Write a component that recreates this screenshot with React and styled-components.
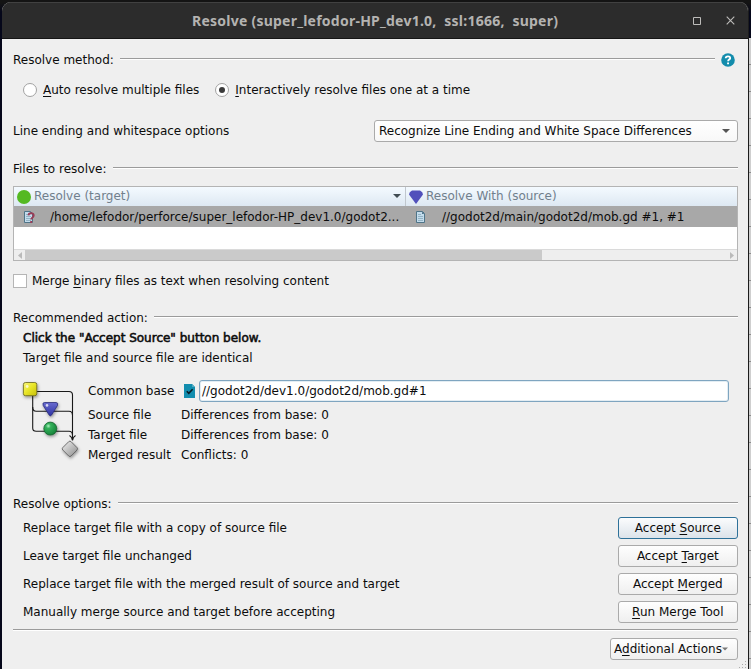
import React from "react";
import styled, { createGlobalStyle, css } from "styled-components";

const GlobalStyle = createGlobalStyle`
  * { box-sizing: border-box; }
  body {
    margin: 0;
    background: #05070f;
    color: #0c0c0c;
    font: 12px/20px "DejaVu Sans", Verdana, sans-serif;
    overflow: hidden;
  }
  svg { display: block; flex: none; }
`;

const Desktop = styled.div`
  display: flex;
  width: 751px;
  height: 669px;
  padding: 2px 0 0 2px;
  background: linear-gradient(#141414 0 3px, #05071a 12px);
`;

const Window = styled.main`
  display: flex;
  flex-direction: column;
  width: 747px;
  height: 667px;
  border-right: 1px solid #1c1c1c;
  border-radius: 9px 9px 0 0;
  background: #efefef;
  overflow: hidden;
`;

const BackgroundEdge = styled.div`
  width: 2px;
  margin-top: 36px;
  background: repeating-linear-gradient(#cfcfcf 0 26px, #8b8b8b 26px 27px);
`;

const TitleBar = styled.header`
  display: flex;
  align-items: center;
  flex: none;
  height: 37px;
  padding: 0 13px 0 190px;
  background: #2c2c2c;
  border-top: 1px solid #414141;
  border-bottom: 1px solid #151515;
  color: #b4b3b1;
`;

const Title = styled.h1`
  flex: 1;
  margin: 0;
  font: 700 14px/20px "Noto Sans", sans-serif;
  letter-spacing: 0.24px;
  white-space: pre;
`;

const WindowControls = styled.div`
  display: flex;
  align-items: center;
  gap: 25px;
`;

const Body = styled.div`
  display: flex;
  flex-direction: column;
  padding: 11px 10px 0 11px;
`;

const Section = styled.div`
  display: flex;
  align-items: center;
  flex: none;
  height: ${(p) => p.$height || 20}px;
  margin-top: ${(p) => p.$top || 0}px;
  padding-right: ${(p) => p.$right || 0}px;
  white-space: nowrap;
`;

const Rule = styled.i`
  flex: 1;
  height: 2px;
  margin: 0 ${(p) => p.$right || 0}px 2px 6px;
  border-top: 1px solid #9b9b9b;
  border-bottom: 1px solid #fff;
`;

const RadioRow = styled.div`
  display: flex;
  align-items: center;
  height: 40px;
  margin-bottom: 1px;
  padding-left: 10px;
  gap: 16px;
`;

const RadioLabel = styled.label`
  display: flex;
  align-items: center;
  gap: 6px;
`;

const Radio = styled.span`
  display: grid;
  place-items: center;
  width: 14px;
  height: 14px;
  border: 1px solid #a2a2a2;
  border-radius: 50%;
  background: #fff;
  ${(p) => p.$checked && css`
    &::after {
      content: "";
      width: 6px;
      height: 6px;
      border-radius: 50%;
      background: #3b3b3b;
    }
  `}
`;

const Key = styled.span`
  text-decoration: underline;
  text-decoration-thickness: 1px;
  text-underline-offset: 2px;
  text-decoration-skip-ink: none;
`;

const WhitespaceRow = styled.div`
  display: flex;
  align-items: center;
  justify-content: space-between;
  height: 40px;
`;

const buttonFace = css`
  display: flex;
  align-items: center;
  height: 22px;
  border: 1px solid #aaa;
  border-radius: 3px;
  background: linear-gradient(#fefefe, #efefef);
  white-space: nowrap;
  font: inherit;
  color: inherit;
`;

const Combo = styled.div`
  ${buttonFace}
  justify-content: space-between;
  width: 364px;
  padding: 0 7px 0 4px;
  background: linear-gradient(#fff, #f8f8f8);
`;

const Table = styled.div`
  display: flex;
  flex-direction: column;
  height: 75px;
  margin-bottom: 1px;
  border: 1px solid #b4b4b4;
  background: #fff;
  overflow: hidden;
`;

const TableRow = styled.div`
  display: grid;
  grid-template-columns: 392px 1fr;
  flex: none;
  height: 21px;
  background: #a8a8a8;
`;

const TableHead = styled(TableRow)`
  height: 19px;
  background: linear-gradient(#f4faff, #dde8f2);
  color: #71808d;
`;

const HeadCell = styled.div`
  display: flex;
  align-items: flex-start;
  gap: 3px;
  height: 19px;
  padding: 3px 4px 0 3px;
  ${(p) => p.$divided && css`border-right: 1px solid #c0c7ce;`}
`;

const HeadText = styled.span`
  flex: 1;
  margin-top: -2px;
  line-height: 16px;
`;

const SortMark = styled.span`
  padding-top: 4px;
`;

const FileCell = styled.div`
  display: flex;
  align-items: center;
  gap: 15px;
  padding-left: 9px;
  white-space: nowrap;
`;

const ScrollBar = styled.div`
  display: flex;
  align-items: center;
  flex: none;
  height: 11px;
  margin-top: auto;
  border-top: 1px solid #dadada;
  background: #eee;
`;

const ScrollArrow = styled.span`
  display: grid;
  place-items: center;
  width: 11px;
  height: 10px;
`;

const ScrollThumb = styled.span`
  width: 517px;
  height: 10px;
  margin-right: auto;
  background: #cacaca;
`;

const CheckRow = styled.label`
  display: flex;
  align-items: center;
  gap: 5px;
  height: 38px;
`;

const CheckBox = styled.span`
  width: 14px;
  height: 14px;
  border: 1px solid #b5b5b5;
  background: #fff;
`;

const Advice = styled.div`
  padding-left: 10px;
`;

const Strong = styled.p`
  margin: 0;
  -webkit-text-stroke: 0.55px #0c0c0c;
`;

const Paragraph = styled.p`
  margin: 0;
`;

const Details = styled.div`
  display: flex;
  height: 126px;
  padding: 10px 9px 0 5px;
`;

const DetailLines = styled.div`
  flex: 1;
  padding-left: 4px;
`;

const DetailLine = styled.div`
  display: flex;
  align-items: center;
  height: 20px;
`;

const BaseLine = styled(DetailLine)`
  height: 27px;
  padding-bottom: 1px;
`;

const DetailName = styled.span`
  flex: none;
  width: ${(p) => p.$width || 93}px;
`;

const PathInput = styled.div`
  flex: 1;
  height: 22px;
  margin-left: 4px;
  padding-left: 2px;
  border: 1px solid #7fa5c0;
  border-radius: 3px;
  box-shadow: inset 0 0 0 1px #e3edf3;
  background: #fff;
`;

const OptionRow = styled.div`
  display: flex;
  align-items: center;
  justify-content: space-between;
  height: 28px;
  padding-left: 10px;
`;

const Button = styled.button`
  ${buttonFace}
  justify-content: center;
  width: 120px;
  padding: 0 0.4px 0 0;
  ${(p) => p.$primary && css`
    border-color: #2e7199;
    background: linear-gradient(#fbfcfd, #dce3ea);
  `}
`;

const MenuButton = styled(Button)`
  justify-content: flex-start;
  width: 128px;
  padding-left: 3px;
`;

const Options = styled.div`
  flex: none;
`;

const FooterRule = styled.div`
  height: 2px;
  margin: 3px 0 7px;
  border-top: 1px solid #9b9b9b;
  border-bottom: 1px solid #fff;
`;

const Footer = styled.footer`
  display: flex;
  justify-content: flex-end;
`;

const GripRow = styled.div`
  display: flex;
  justify-content: flex-end;
  height: 9px;
  margin-top: auto;
`;

const Caret = ({ w = 8, fill = "#555" }) => (
  <svg width={w} height="4" viewBox="0 0 8 4"><path d="M0 0h8L4 4z" fill={fill} /></svg>
);

const HelpIcon = () => (
  <svg width="14" height="14" viewBox="0 0 14 14">
    <circle cx="7" cy="7" r="6.8" fill="#138cac" />
    <path d="M4.7 5.2C4.8 2.6 9.3 2.7 9.2 5.1C9.1 6.7 7.1 6.5 7.1 8.2" fill="none" stroke="#fff" strokeWidth="1.8" />
    <path d="M6.1 9.4h1.9v1.9H6.1z" fill="#fff" />
  </svg>
);

const FileIcon = ({ question }) => (
  <svg width="12" height="14" viewBox="0 0 12 14">
    <path d="M1.5 1.5h6l2 2v9h-8z" fill="#c3dcec" stroke="#4f7488" />
    <path d="M7 1.5v2.6h2.5z" fill="#4f7488" />
    <path d="M3 4.5h3M3 6.5h5M3 8.5h5M3 10.5h5" stroke="#86a8bb" strokeWidth=".8" />
    {question && (
      <g>
        <path d="M5.5 5.4C5.6 2.4 10.8 2.6 10.7 5.4C10.6 7.6 8.2 7.2 8.2 9.6" fill="none" stroke="#9a3c55" strokeWidth="1.9" />
        <path d="M7.2 11h2v2h-2z" fill="#9a3c55" />
      </g>
    )}
  </svg>
);

const MergeDiagram = () => (
  <svg width="66" height="84" viewBox="18 378 66 84">
    <defs>
      <linearGradient id="yellow" x1="0" y1="0" x2="1" y2="1">
        <stop offset="0" stopColor="#f7f47e" /><stop offset=".45" stopColor="#eae72b" /><stop offset="1" stopColor="#c6bf08" />
      </linearGradient>
      <linearGradient id="blue" x1="0" y1="0" x2="0" y2="1">
        <stop offset="0" stopColor="#686ace" /><stop offset="1" stopColor="#2f34a5" />
      </linearGradient>
      <radialGradient id="green" cx=".35" cy=".3" r=".75">
        <stop offset="0" stopColor="#b0f0c0" /><stop offset=".25" stopColor="#35b25c" /><stop offset="1" stopColor="#148037" />
      </radialGradient>
      <linearGradient id="grey" x1="0" y1="0" x2="1" y2="1">
        <stop offset="0" stopColor="#f2f2f2" /><stop offset="1" stopColor="#8b8b8b" />
      </linearGradient>
      <filter id="shade" x="-40%" y="-40%" width="190%" height="190%">
        <feDropShadow dx=".8" dy="1.5" stdDeviation="1.5" floodOpacity=".4" />
      </filter>
    </defs>
    <g fill="none" stroke="#191919" strokeWidth="1.1">
      <path d="M37 391.5H69q3.5 0 3.5 3.5V440" />
      <path d="M32.7 396V428q0 3.3 3.5 3.3H69q3.5 0 3.5 4" />
      <path d="M32.7 407q0 4.3 3.5 4.3H69q3.5 0 3.5 4" />
      <path d="M69.5 435.5q2.5 1.5 3 5q.5-3.5 3-5" />
    </g>
    <g filter="url(#shade)" strokeWidth=".8">
      <rect x="23.4" y="382.5" width="13.4" height="13.2" rx="2" fill="url(#yellow)" stroke="#65621b" />
      <path d="M44.5 402.5H56q2.5 0 1.5 3L51.6 415q-1.2 1.8-2.5 0L43.2 405.5q-1.1-3 1.3-3z" fill="url(#blue)" stroke="#292d78" />
      <circle cx="50.3" cy="428.6" r="6.5" fill="url(#green)" stroke="#17612f" />
      <path d="M68.7 441.7q1.2-1.2 2.4 0L77 447.6q1.2 1.2 0 2.4L71.1 456q-1.2 1.2-2.4 0L62.8 450q-1.2-1.2 0-2.4z" fill="url(#grey)" stroke="#555" />
    </g>
    <circle cx="27.2" cy="386.5" r="1.4" fill="#fff" opacity=".7" />
    <circle cx="47" cy="405.4" r="1.3" fill="#fff" opacity=".75" />
  </svg>
);

const BaseIcon = () => (
  <svg width="11" height="14" viewBox="0 0 11 14">
    <path d="M0 0h8l3 3v11H0z" fill="#128dae" />
    <path d="M8 0v3h3z" fill="#52a9c0" />
    <path d="M2.8 7.2l2 2.1 3.8-4" fill="none" stroke="#071b24" strokeWidth="1.6" />
  </svg>
);

const options = [
  ["Replace target file with a copy of source file", "Accept ", "S", "ource", true],
  ["Leave target file unchanged", "Accept ", "T", "arget"],
  ["Replace target file with the merged result of source and target", "Accept ", "M", "erged"],
  ["Manually merge source and target before accepting", "", "R", "un Merge Tool"],
];

export default function App() {
  return (
    <Desktop>
      <GlobalStyle />
      <Window>
        <TitleBar>
          <Title>{"Resolve (super_lefodor-HP_dev1.0,  ssl:1666,  super)"}</Title>
          <WindowControls>
            <svg width="8" height="8"><path d="M.5.5h7v7h-7z" fill="none" stroke="#bdbcba" /></svg>
            <svg width="9" height="9"><path d="M.7.7l7.6 7.6M8.3.7L.7 8.3" stroke="#bdbcba" strokeWidth="1.1" /></svg>
          </WindowControls>
        </TitleBar>
        <Body>
          <Section $right={3}>Resolve method:<Rule $right={6} /><HelpIcon /></Section>
          <RadioRow>
            <RadioLabel><Radio /><span><Key>A</Key>uto resolve multiple files</span></RadioLabel>
            <RadioLabel><Radio $checked /><span><Key>I</Key>nteractively resolve files one at a time</span></RadioLabel>
          </RadioRow>
          <WhitespaceRow>
            Line ending and whitespace options
            <Combo>Recognize Line Ending and White Space Differences<Caret /></Combo>
          </WhitespaceRow>
          <Section $height={35}>Files to resolve:<Rule /></Section>
          <Table>
            <TableHead>
              <HeadCell $divided>
                <svg width="14" height="14"><circle cx="7" cy="7" r="7" fill="#55b922" /></svg>
                <HeadText>Resolve (target)</HeadText>
                <SortMark><Caret fill="#414c52" /></SortMark>
              </HeadCell>
              <HeadCell>
                <svg width="14" height="14"><path d="M3 .5h8q3 1.5 3 4L7 14 0 4.5Q0 2 3 .5z" fill="#5150bb" /></svg>
                <HeadText>Resolve With (source)</HeadText>
              </HeadCell>
            </TableHead>
            <TableRow>
              <FileCell><FileIcon question />/home/lefodor/perforce/super_lefodor-HP_dev1.0/godot2...</FileCell>
              <FileCell><FileIcon />//godot2d/main/godot2d/mob.gd #1, #1</FileCell>
            </TableRow>
            <ScrollBar>
              <ScrollArrow><svg width="4" height="7"><path d="M4 0v7L0 3.5z" fill="#bababa" /></svg></ScrollArrow>
              <ScrollThumb />
              <ScrollArrow><svg width="4" height="7"><path d="M0 0v7l4-3.5z" fill="#bababa" /></svg></ScrollArrow>
            </ScrollBar>
          </Table>
          <CheckRow><CheckBox /><span>Merge <Key>b</Key>inary files as text when resolving content</span></CheckRow>
          <Section $top={8}>Recommended action:<Rule /></Section>
          <Advice>
            <Strong>Click the "Accept Source" button below.</Strong>
            <Paragraph>Target file and source file are identical</Paragraph>
          </Advice>
          <Details>
            <MergeDiagram />
            <DetailLines>
              <BaseLine>
                <DetailName $width={96}>Common base</DetailName>
                <BaseIcon />
                <PathInput>//godot2d/dev1.0/godot2d/mob.gd#1</PathInput>
              </BaseLine>
              <DetailLine><DetailName>Source file</DetailName>Differences from base: 0</DetailLine>
              <DetailLine><DetailName>Target file</DetailName>Differences from base: 0</DetailLine>
              <DetailLine><DetailName>Merged result</DetailName>Conflicts: 0</DetailLine>
            </DetailLines>
          </Details>
          <Section>Resolve options:<Rule /></Section>
          <Options>
            {options.map(([text, before, key, after, primary]) => (
              <OptionRow key={text}>
                {text}
                <Button $primary={primary}><span>{before}<Key>{key}</Key>{after}</span></Button>
              </OptionRow>
            ))}
          </Options>
          <FooterRule />
          <Footer>
            <MenuButton><span>A<Key>d</Key>ditional Actions</span><Caret w={6} fill="#777" /></MenuButton>
          </Footer>
        </Body>
        <GripRow>
          <svg width="12" height="9">
            <path d="M9 1.5h1M6 4.5h1M9 4.5h1M3 7.5h1M6 7.5h1M9 7.5h1" stroke="#aaa" />
          </svg>
        </GripRow>
      </Window>
      <BackgroundEdge />
    </Desktop>
  );
}
